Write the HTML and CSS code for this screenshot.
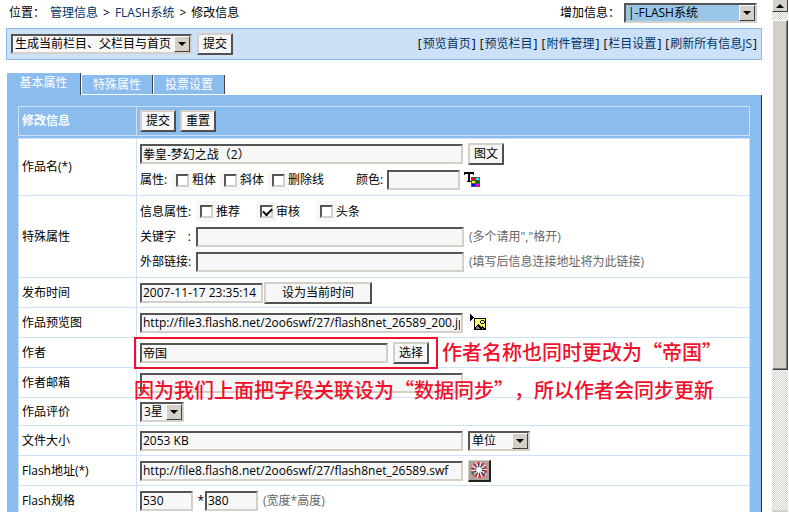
FILE: index.html
```
<!DOCTYPE html>
<html lang="zh-CN">
<head>
<meta charset="utf-8">
<title>修改信息</title>
<link rel="stylesheet" href="styles.css">
</head>
<body>
<main class="page">
  <header class="top">
    <nav class="crumbs"><span>位置：</span><a href="#">管理信息</a><span>&gt;</span><a href="#">FLASH系统</a><span>&gt;</span><span>修改信息</span></nav>
    <div class="add">
      <label for="add-class">增加信息：</label>
      <span class="pick pick-add"><select id="add-class"><option>|-FLASH系统</option></select><i class="drop"></i></span>
    </div>
  </header>

  <div class="toolbar">
    <form class="build">
      <span class="pick pick-build"><select aria-label="生成"><option>生成当前栏目、父栏目与首页</option></select><i class="drop"></i></span>
      <button type="button" class="btn">提交</button>
    </form>
    <nav class="links"><span>[<a href="#">预览首页</a>]</span><span>[<a href="#">预览栏目</a>]</span><span>[<a href="#">附件管理</a>]</span><span>[<a href="#">栏目设置</a>]</span><span>[<a href="#">刷新所有信息JS</a>]</span></nav>
  </div>

  <nav class="tabs">
    <a href="#" class="tab tab-on">基本属性</a>
    <a href="#" class="tab">特殊属性</a>
    <a href="#" class="tab">投票设置</a>
  </nav>

  <form class="panel">
    <table class="grid head">
      <tr>
        <th>修改信息</th>
        <td><div class="line"><button type="button" class="btn">提交</button><button type="reset" class="btn">重置</button></div></td>
      </tr>
    </table>
    <table class="grid body">
      <tr class="tall">
        <th><label for="title">作品名(*)</label></th>
        <td>
          <div class="line">
            <input class="box wide" id="title" type="text" value="拳皇-梦幻之战（2）">
            <button type="button" class="btn">图文</button>
          </div>
          <div class="line">
            <span class="cap">属性:</span>
            <label class="tick"><input type="checkbox">粗体</label>
            <label class="tick"><input type="checkbox">斜体</label>
            <label class="tick"><input type="checkbox">删除线</label>
            <label class="colour" for="colour">颜色:</label>
            <input class="box tone" id="colour" type="text">
            <svg class="icon-tone" width="17" height="16" viewBox="0 0 17 16" shape-rendering="crispEdges" aria-hidden="true">
              <path d="M0 0h10v3h-1v-1h-3v7h1v1h-4v-1h1v-7h-3v1h-1z" fill="#000"/>
              <path d="M7 5h9v10h-9z" fill="#555"/>
              <path d="M8 6h3v2h-3z" fill="#f00"/><path d="M12 6h3v2h-3z" fill="#0ff"/>
              <path d="M8 9h3v2h-3z" fill="#ff0"/><path d="M12 9h3v2h-3z" fill="#060"/>
              <path d="M8 12h3v2h-3z" fill="#00f"/><path d="M12 12h3v2h-3z" fill="#f0f"/>
            </svg>
          </div>
        </td>
      </tr>
      <tr class="taller">
        <th>特殊属性</th>
        <td>
          <div class="line">
            <span class="cap cap-wide">信息属性:</span>
            <label class="tick tick-far"><input type="checkbox">推荐</label>
            <label class="tick tick-far"><input type="checkbox" checked>审核</label>
            <label class="tick tick-far"><input type="checkbox">头条</label>
          </div>
          <div class="line">
            <label class="cap cap-wide cap-split" for="keys"><span>关键字</span><span>:</span></label>
            <input class="box long" id="keys" type="text">
            <span class="note">(多个请用","格开)</span>
          </div>
          <div class="line">
            <label class="cap cap-wide" for="outer">外部链接:</label>
            <input class="box long" id="outer" type="text">
            <span class="note">(填写后信息连接地址将为此链接)</span>
          </div>
        </td>
      </tr>
      <tr>
        <th><label for="time">发布时间</label></th>
        <td><div class="line tight"><input class="box date" id="time" type="text" value="2007-11-17 23:35:14"><button type="button" class="btn btn-now">设为当前时间</button></div></td>
      </tr>
      <tr>
        <th><label for="pic">作品预览图</label></th>
        <td>
          <div class="line">
            <input class="box wide" id="pic" type="text" value="http://file3.flash8.net/2oo6swf/27/flash8net_26589_200.jpg">
            <svg class="icon-pic" width="17" height="17" viewBox="0 0 17 17" shape-rendering="crispEdges" aria-hidden="true">
              <path d="M0 0h1v1h1v1h1v1h1v1h-1v1h-1v1h-1v1h-1z" fill="#000"/>
              <path d="M4 4h12v12h-12z" fill="#000"/>
              <path d="M5 5h10v10h-10z" fill="#ff6"/>
              <path d="M11 6h3v1h1v2h-1v1h-3v-1h-1v-2h1z" fill="#000"/><path d="M11 7h3v2h-3z" fill="#ff6"/>
              <path d="M5 13h1v-1h1v-1h1v-1h1v1h1v1h1v1h1v-1h1v1h1v1h1v1h-10z" fill="#000"/>
              <path d="M6 13h1v-1h1v1h1v1h1v1h-4zM12 14h1v1h-1z" fill="#888"/>
            </svg>
          </div>
        </td>
      </tr>
      <tr>
        <th><label for="author">作者</label></th>
        <td class="marked">
          <div class="line">
            <input class="box author" id="author" type="text" value="帝国">
            <button type="button" class="btn">选择</button>
          </div>
          <div class="mark-frame"></div>
          <p class="mark mark-side">作者名称也同时更改为“帝国”</p>
          <p class="mark mark-below">因为我们上面把字段关联设为“数据同步”，所以作者会同步更新</p>
        </td>
      </tr>
      <tr>
        <th><label for="mail">作者邮箱</label></th>
        <td><div class="line"><input class="box wide" id="mail" type="text"></div></td>
      </tr>
      <tr class="short">
        <th><label for="rate">作品评价</label></th>
        <td><div class="line"><span class="pick pick-rate"><select id="rate"><option>3星</option></select><i class="drop"></i></span></div></td>
      </tr>
      <tr>
        <th><label for="size">文件大小</label></th>
        <td><div class="line"><input class="box wide" id="size" type="text" value="2053 KB"><span class="pick pick-unit"><select aria-label="单位"><option>单位</option></select><i class="drop"></i></span></div></td>
      </tr>
      <tr>
        <th><label for="url">Flash地址(*)</label></th>
        <td>
          <div class="line">
            <input class="box wide" id="url" type="text" value="http://file8.flash8.net/2oo6swf/27/flash8net_26589.swf">
            <button type="button" class="btn-disc" aria-label="上传">
              <svg width="18" height="18" viewBox="0 0 18 18" aria-hidden="true">
                <circle cx="9" cy="9" r="8.300" fill="#eee4e2"/>
                <circle cx="9" cy="9" r="7" fill="none" stroke="#d8404a" stroke-width="2.600" stroke-dasharray="3 1.400"/>
                <circle cx="9" cy="9" r="4.400" fill="none" stroke="#2b2f57" stroke-width="3" stroke-dasharray="1.200 1.560"/>
                <path d="M1 10l4 2-2 3zM12 15l3-2 1-3z" fill="#35519c"/>
                <path d="M3 12l3-1-1 4z" fill="#e8a33b"/>
                <circle cx="9" cy="9" r="1.800" fill="#fff"/>
              </svg>
            </button>
          </div>
        </td>
      </tr>
      <tr>
        <th><label for="w">Flash规格</label></th>
        <td><div class="line tight"><input class="box dim" id="w" type="text" value="530"><span class="times">*</span><input class="box dim" type="text" value="380" aria-label="高度"><span class="note note-dim">(宽度*高度)</span></div></td>
      </tr>
    </table>
  </form>
</main>

<div class="scroll" aria-hidden="true">
  <div class="scroll-up"></div>
  <div class="scroll-gap"></div>
  <div class="scroll-thumb"></div>
  <div class="scroll-rest"></div>
  <div class="scroll-down"></div>
</div>
</body>
</html>
```
FILE: styles.css
```
* { box-sizing: border-box; }

body,
button,
input,
select {
  font-family: "Open Sans", "Noto Sans CJK SC", sans-serif;
  font-size: 12px;
  line-height: 16px;
  color: #000;
}

body {
  display: flex;
  height: 100vh;
  margin: 0;
  overflow: hidden;
  background: #fff;
}

a { color: #036; text-decoration: none; }

.page { flex: 1; min-width: 0; padding: 0 10px 0 6px; overflow: hidden; }

/* top row */
.top {
  display: flex;
  justify-content: space-between;
  align-items: center;
  height: 28px;
  padding: 0 5px 2px 3px;
}
.crumbs { display: flex; gap: 5px; }
.add { display: flex; align-items: center; gap: 4px; }

/* drop-downs */
.pick { position: relative; display: inline-flex; height: 20px; }
.pick select {
  appearance: none;
  width: 100%;
  height: 20px;
  margin: 0;
  padding: 0 18px 0 2px;
  border: 2px solid;
  border-color: #555 #d4d0c8 #d4d0c8 #555;
  border-radius: 0;
  background: #f7f7f7;
}
.drop {
  position: absolute;
  top: 2px;
  right: 2px;
  width: 16px;
  height: 16px;
  border: 1px solid;
  border-color: #fff #404040 #404040 #fff;
  background: #d4d0c8;
  pointer-events: none;
}
.drop::before {
  content: "";
  position: absolute;
  top: 5px;
  left: 3px;
  border: 4px solid transparent;
  border-top-color: #000;
  border-bottom: 0;
}
.pick-add { width: 133px; }
.pick-add select { background: #99c5e6; }
.pick-build { width: 181px; }
.pick-rate { width: 44px; }
.pick-unit { width: 62px; }

/* buttons and text boxes */
.btn {
  height: 22px;
  min-width: 36px;
  padding: 0 4px;
  border: 2px solid;
  border-color: #d4d0c8 #505050 #505050 #d4d0c8;
  border-radius: 0;
  background: #f7f7f7;
  white-space: nowrap;
  line-height: 18px;
}
.btn-now { width: 108px; }
.box {
  height: 20px;
  margin: 0;
  padding: 0 1px;
  border: 2px solid;
  border-color: #555 #d4d0c8 #d4d0c8 #555;
  border-radius: 0;
  background: #f7f7f7;
}
.wide { width: 323px; }
.long { width: 268px; }
.author { width: 248px; }
.date { width: 123px; }
.tone { width: 73px; }
.dim { width: 53px; }

/* toolbar */
.toolbar {
  display: flex;
  justify-content: space-between;
  align-items: center;
  height: 32px;
  padding: 0 4px;
  border: 1px solid #8bbcee;
  background: #cce0f8;
}
.build { display: flex; align-items: center; gap: 5px; }
.links { display: flex; gap: 4px; white-space: nowrap; }
.links a { margin: 0 1px; }

/* tabs */
.tabs {
  display: flex;
  align-items: flex-end;
  height: 35px;
  margin-left: 1px;
}
.tab {
  width: 72px;
  height: 19px;
  margin-bottom: 1px;
  border-right: 1px solid #404040;
  border-left: 1px solid #fff;
  background: #8bbcee;
  color: #fff;
  line-height: 19px;
  text-align: center;
}
.tab-on { width: 74px; height: 22px; margin-bottom: 0; border-left: 0; }

/* form */
.panel {
  margin-left: 1px;
  padding: 11px 11px 0;
  border-right: 1px solid #334;
  background: #8bbcee;
}
.grid {
  width: 100%;
  table-layout: fixed;
  border-spacing: 1px;
  background: #cce0f8;
}
.grid th {
  width: 117px;
  padding: 0 3px;
  text-align: left;
  font-weight: normal;
}
.grid td { padding: 0 3px; }
.head { margin-bottom: 2px; }
.head th,
.head td { height: 28px; background: #8bbcee; }
.head th { color: #fff; font-weight: bold; }
.body th,
.body td { height: 29px; background: #fff; }
.body .short th,
.body .short td { height: 27px; }
.body .tall td { height: 56px; }
.body .taller td { height: 81px; }

.line { display: flex; align-items: center; gap: 5px; }
.head .line { gap: 4px; }
.tight { gap: 1px; }
.tall .line { gap: 4px; height: 26px; }
.tall .line:first-child { gap: 5px; }
.taller .line { height: 25px; }
.cap { width: 28px; white-space: nowrap; }
.cap-wide { width: 51px; }
.cap-split { display: flex; justify-content: space-between; }
.note { color: #666; }
.note-dim { margin-left: 4px; }
.times { width: 10px; text-align: right; }
.colour { margin-left: 28px; }

.tick { display: flex; align-items: center; white-space: nowrap; }
.tick-far { margin-right: 11px; }
.tick input {
  appearance: none;
  width: 13px;
  height: 13px;
  margin: 0 3px 0 4px;
  border: 2px solid;
  border-color: #555 #d4d0c8 #d4d0c8 #555;
  background: #fff;
  box-shadow: 0 0 0 4px #f7f7f7;
}
.tick input:checked::before {
  content: "";
  display: block;
  width: 7px;
  height: 4px;
  margin: 1px;
  border: 2px solid #000;
  border-top: 0;
  border-right: 0;
  transform: rotate(-45deg);
}

.icon-pic { margin-left: 2px; }
.btn-disc {
  display: grid;
  place-items: center;
  width: 23px;
  height: 22px;
  padding: 0;
  border: 1px solid;
  border-color: #d4d0c8 #222 #222 #d4d0c8;
  border-width: 1px 2px 2px 1px;
  background: #aaa09c;
}

/* red annotations laid over the author rows */
.marked { position: relative; }
.mark-frame {
  position: absolute;
  top: -1px;
  left: -3px;
  width: 304px;
  height: 32px;
  border: 2px solid #f0102c;
  pointer-events: none;
}
.mark {
  position: absolute;
  margin: 0;
  font-family: "Noto Sans CJK SC", sans-serif;
  font-size: 20px;
  font-weight: 500;
  line-height: 28px;
  color: #f0102c;
  white-space: nowrap;
  text-spacing-trim: space-all;
  pointer-events: none;
}
.mark-side { top: 0; left: 305px; }
.mark-below { top: 38px; left: -3px; }

/* scroll bar */
.scroll {
  display: flex;
  flex-direction: column;
  width: 16px;
  margin-right: 1px;
  background: repeating-conic-gradient(#d4d0c8 0 25%, #fff 0 50%) 0 0 / 2px 2px;
}
.scroll-up {
  display: grid;
  place-items: center;
  height: 12px;
  border: 1px solid;
  border-color: #d4d0c8 #404040 #404040 #fff;
  border-top: 0;
  background: #d4d0c8;
}
.scroll-up::before {
  content: "";
  border: 4px solid transparent;
  border-top: 0;
  border-bottom-color: #000;
}
.scroll-gap { height: 8px; }
.scroll-thumb {
  flex: 349;
  border: 1px solid;
  border-color: #fff #404040 #404040 #fff;
  background: #d4d0c8;
  box-shadow: inset -1px -1px #808080;
}
.scroll-rest { flex: 141; }
.scroll-down { height: 2px; background: #d4d0c8; }
```
